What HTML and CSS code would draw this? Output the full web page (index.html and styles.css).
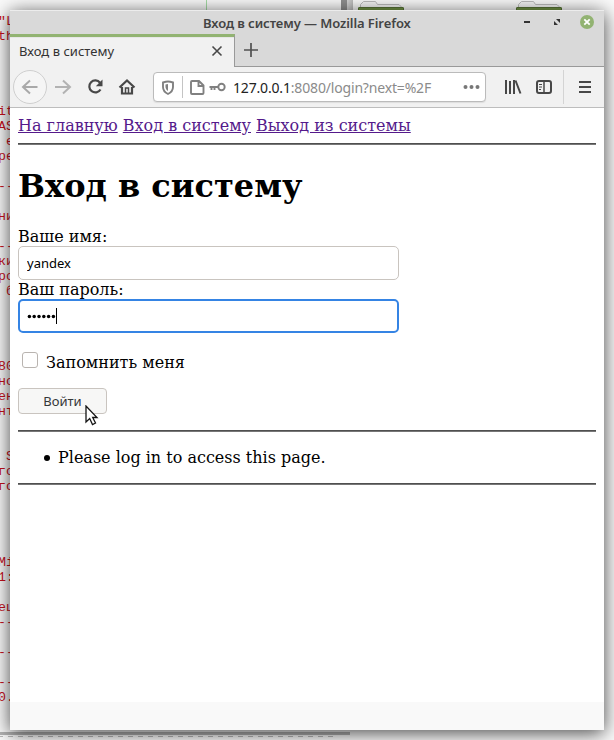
FILE: index.html
```html
<!DOCTYPE html>
<html lang="ru">
<head>
<meta charset="utf-8">
<title>Вход в систему</title>
<link rel="stylesheet" href="styles.css">
</head>
<body>
<div class="desktop">
<div class="guide"></div>
<div class="divider"></div>
<svg class="folders" width="264" height="12" viewBox="0 0 264 12"><g id="folder"><path d="M10.500 7V4.500l3-3h12l2 3h21.500l2 2V9" fill="#f4f4f4" stroke="#bbb"/><path d="M8.500 12V8q0-.5.5-.5h44q.5 0 .5.5v4" fill="#729545" stroke="#587338"/></g><use href="#folder" x="158"/></svg>
<pre class="terminal">"L
th




it
AS
 е
ре

--

ни

--
ки
ро
 б




80
но
ен
нт


 S
го
го




Mi
1:

ец
--

--

--
0.</pre>
<div class="pane-edge"></div>
<div class="dashes"></div>
</div>
<main class="window">
<header class="titlebar">
<span class="window-title">Вход в систему — Mozilla Firefox</span>
<svg class="window-controls" width="76" height="24" viewBox="0 0 76 24"><path d="M0 11h6v2H0z" fill="#333"/><path d="M32 9h4v4zM30 11v4h4z" fill="#333"/><circle cx="63" cy="12" r="7" fill="#92b372"/><path d="m60.300 9.300 5.400 5.400m0-5.400-5.400 5.400" stroke="#fff" stroke-width="1.800"/></svg>
</header>
<div class="tabs">
<div class="tab"><span>Вход в систему</span><svg width="12" height="12" viewBox="0 0 12 12"><path d="m1.500 1.500 9 9m0-9-9 9" stroke="#484848" stroke-width="1.600"/></svg></div>
<div class="tab-space"><svg width="14" height="14" viewBox="0 0 14 14"><path d="M7 0v14M0 7h14" stroke="#505050" stroke-width="1.700"/></svg></div>
</div>
<nav class="toolbar">
<svg class="nav-icons" width="143" height="40" viewBox="0 0 143 40" fill="none">
<circle cx="20" cy="20" r="16.500" fill="#f5f5f5" stroke="#cfcfcf"/>
<path d="M27.500 20H13m7-6.500L13 20l7 6.500" stroke="#a9a9a9" stroke-width="2"/>
<path d="M45 20h15m-7-6.500 7 6.500-7 6.500" stroke="#b2b2b2" stroke-width="2"/>
<path d="M90 15.700a6 6 0 1 0 .500 6.800" stroke="#484848" stroke-width="2.200"/><path d="M92.500 12.500v6.700h-6.700z" fill="#484848"/>
<path d="m109.500 20.500 7.500-7 7.500 7M112 20v6.500h10V20" stroke="#484848" stroke-width="2.200"/><path d="M115.500 26v-5h3v5" stroke="#484848" stroke-width="1.500"/>
</svg>
<div class="urlbar">
<svg width="72" height="28" viewBox="0 0 72 28" fill="none" stroke="#808080">
<path d="M14 8.500c-2 0-3.500.5-5 1v4.500c0 3.500 2 5.500 5 7 3-1.500 5-3.500 5-7V9.500c-1.500-.5-3-1-5-1z" stroke-width="1.900"/><path d="M14 11v7c-1.500-1-2.500-2.500-2.500-4v-2.500z" fill="#808080" stroke="none"/>
<path d="M28.500 3v22" stroke="#c4c4c4"/>
<path d="M38 8h7l4.500 4.500V20q0 1-1 1H38q-1 0-1-1V9q0-1 1-1zM44.500 8v5h5" stroke-width="1.900"/>
<circle cx="67.500" cy="14" r="3.200" stroke-width="1.900"/><path d="M64 14h-8.500m2 0v3m3-3v3" stroke-width="1.900"/>
</svg>
<span class="url"><b>127.0.0.1</b>:8080/login?next=%2F</span>
<svg width="17" height="6" viewBox="0 0 17 6" fill="#777"><circle cx="2.500" cy="3" r="2"/><circle cx="8.500" cy="3" r="2"/><circle cx="14.500" cy="3" r="2"/></svg>
</div>
<svg class="tool-icons" width="118" height="40" viewBox="0 0 118 40" fill="none" stroke="#484848">
<path d="M20 13v14M24 14v13M28 13v14M29.500 13.500l5 13" stroke-width="2"/>
<rect x="51" y="14" width="14" height="12" rx="2" stroke-width="2"/><path d="M58 14v12" stroke-width="1.500"/><path d="M53 17.500h3m-3 2.500h3m-3 2.500h2"/>
<path d="M77.500 3v34" stroke="#d4d4d4"/>
<path d="M93 15h12M93 20h12M93 25h12" stroke-width="2"/>
</svg>
</nav>
<section class="page">
<div class="links"><a href="#">На главную</a> <a href="#">Вход в систему</a> <a href="#">Выход из системы</a></div>
<hr>
<h1>Вход в систему</h1>
<form>
<label for="name">Ваше имя:</label>
<input class="field" id="name" type="text" value="yandex">
<label for="password">Ваш пароль:</label>
<div class="field focused" id="password"><svg width="29" height="16" viewBox="0 0 29 16"><g fill="#000"><circle cx="2.400" cy="8.500" r="1.750"/><circle cx="7.200" cy="8.500" r="1.750"/><circle cx="12" cy="8.500" r="1.750"/><circle cx="16.800" cy="8.500" r="1.750"/><circle cx="21.600" cy="8.500" r="1.750"/><circle cx="26.400" cy="8.500" r="1.750"/></g></svg><i class="caret"></i></div>
<label class="remember"><i class="checkbox"></i><span>Запомнить меня</span></label>
<button class="submit" type="button">Войти<svg class="pointer" width="14" height="22" viewBox="0 0 14 22"><path d="M1 1v16l3.700-3.500 2.800 6 3-1.500-2.800-5.500H12z" fill="#fff" stroke="#151515" stroke-width="1.300"/></svg></button>
</form>
<hr>
<ul><li>Please log in to access this page.</li></ul>
<hr>
</section>
<footer class="statusbar"></footer>
</main>
</body>
</html>
```
FILE: styles.css
```css
* { box-sizing: border-box; }
body { margin: 0; width: 614px; height: 740px; overflow: hidden; position: relative; }
.desktop { position: absolute; inset: 0; background: #fafafa; overflow: hidden; }
.terminal { position: absolute; left: -2px; top: 14px; margin: 0; color: #c8101c; font: 13.3px/15.02px "Liberation Mono", monospace; }
.guide { position: absolute; left: 206px; top: 0; width: 1px; height: 12px; background: #a5dca5; }
.divider { position: absolute; left: 341px; top: 0; width: 12px; height: 12px; background: linear-gradient(90deg, #909090 50%, #d8d8d8 50%, #bbb); }
.folders { position: absolute; left: 350px; top: 0; }
.pane-edge { position: absolute; left: 0; top: 732px; width: 350px; height: 3px; background: #b4b4b4; }
.dashes { position: absolute; left: -2px; top: 736px; width: 335px; height: 1px; background: repeating-linear-gradient(90deg, #bbb 0 5px, transparent 5px 10px); }
.window { position: absolute; left: 10px; top: 10px; width: 594px; height: 720px; display: flex; flex-direction: column; background: #fff; box-shadow: 0 3px 18px rgba(0, 0, 0, .72); font-family: "Noto Sans", sans-serif; }
.titlebar { height: 24px; display: flex; align-items: center; justify-content: center; position: relative; background: #d9d9d9; border-top: 1px solid #ececec; }
.window-title { font-size: 13px; font-weight: 600; line-height: 24px; color: #444; width: 208px; white-space: nowrap; letter-spacing: -.08px; margin-top: 1px; }
.window-controls { position: absolute; right: 4px; top: -1px; }
.tabs { height: 33px; display: flex; }
.tab { width: 225px; display: flex; align-items: center; justify-content: space-between; padding: 0 11px 2px 9px; background: #f1f1f1; border-top: 3px solid #92b372; border-right: 1px solid #999; font-size: 13px; color: #333; letter-spacing: .02px; box-shadow: inset 0 1px #e6e6e6, 0 -1px #999; }
.tab-space { flex: 1; background: #d9d9d9; border-bottom: 1px solid #999; padding: 9px; }
.tab-space svg { display: block; }
.toolbar { height: 41px; display: flex; align-items: center; background: #f1f1f1; border-bottom: 1px solid #bdbdbd; }
.urlbar { width: 333px; height: 30px; display: flex; align-items: center; background: #fff; border: 1px solid #bbb; border-radius: 4px; box-shadow: 0 1px 1px #ddd; padding-right: 5px; }
.url { flex: 1; margin-left: 7px; font-size: 14px; color: #8b8b8b; letter-spacing: -.17px; white-space: nowrap; }
.url b { color: #222; font-weight: 400; }
.page { flex: 1; padding: 8px; font: 16px/19px "DejaVu Serif", serif; color: #000; }
.links { height: 19px; white-space: nowrap; }
a { color: #551a8b; text-underline-offset: 1px; }
hr { height: 2px; margin: 8px 0; border: 0; background: #777; border-top: 1px solid #505050; }
h1 { font-size: 32px; line-height: 37px; margin: 23px 0 22px; }
label { display: block; height: 19px; }
.field { display: flex; align-items: center; width: 381px; height: 34px; padding: 0 8px; border: 1px solid #c9c4bf; border-radius: 5px; background: #fff; font: 13px "Noto Sans", sans-serif; color: #000; outline: 0; }
.focused { padding: 0 7px; border: 2px solid #3584e4; }
.caret { width: 1px; height: 16px; background: #000; }
label.remember { display: flex; align-items: center; height: 19px; margin: 20px 0 16px 4px; gap: 8px; }
.checkbox { width: 16px; height: 16px; border: 1px solid #b9b4b0; border-radius: 3px; margin-top: -5px; }
.submit { position: relative; display: block; width: 89px; height: 26px; padding: 0; border: 1px solid #c9c4bf; border-radius: 4px; background: #f7f7f6; font: 13px "Noto Sans", sans-serif; color: #353839; }
.pointer { position: absolute; left: 66px; top: 16px; }
form { margin-bottom: 16px; }
ul { margin: 16px 0; padding-left: 40px; list-style: none; }
li { position: relative; }
li::before { content: ""; position: absolute; left: -14px; top: 7px; width: 6px; height: 6px; border-radius: 50%; background: #000; }
.statusbar { height: 28px; background: #f9f9f9; }
```
